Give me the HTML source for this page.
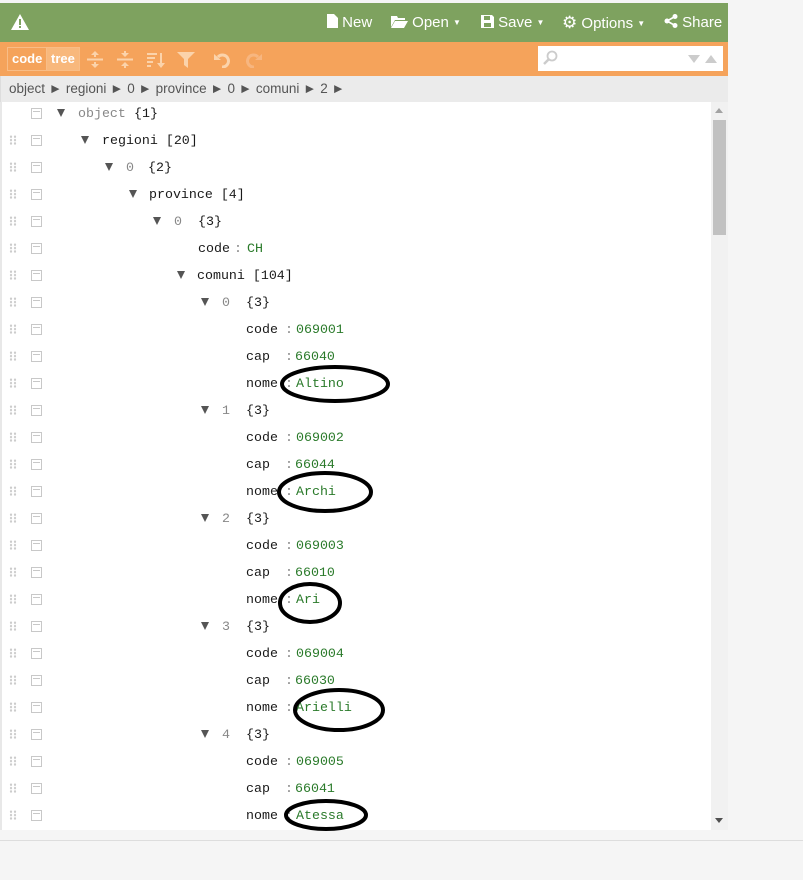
<!DOCTYPE html>
<html><head><meta charset="utf-8"><style>
*{margin:0;padding:0;box-sizing:border-box}
body{width:803px;height:880px;background:#f5f5f5;position:relative;overflow:hidden;font-family:"Liberation Sans",Arial,sans-serif}
#hdr{position:absolute;left:0;top:3px;width:728px;height:39px;background:#7ea25f}
#tb{position:absolute;left:0;top:42px;width:728px;height:34px;background:#f5a35b}
#bc{position:absolute;left:0;top:76px;width:728px;height:26px;background:#ebebeb;color:#555;font-size:13.5px;line-height:26px;padding-left:8px;border-left:1px solid #ddd}
#tree{position:absolute;left:0;top:102px;width:728px;height:728px;background:#fff;border-left:2px solid #e8e8e8;overflow:hidden}
.m{position:absolute;font-family:"Liberation Mono","DejaVu Sans Mono",monospace;font-size:13.3px;line-height:16px;color:#1a1a1a;white-space:pre}
.g{color:#888}.v{color:#2a7a2a}
.t{position:absolute;width:0;height:0;border-left:4.5px solid transparent;border-right:4.5px solid transparent;border-top:8px solid #555}
.cb{position:absolute;left:31px;width:11px;height:11px;border:1px solid #c8c8c8}
.cb:after{content:"";position:absolute;left:1px;right:1px;top:2px;border-top:1px solid #c8c8c8}
.dh{position:absolute;left:9px;width:8px;height:10px;background-image:radial-gradient(circle,#ccc 1.1px,transparent 1.3px);background-size:4px 3.4px}
.hb{position:absolute;top:0;height:39px;line-height:39px;color:#fff;font-size:15px}
.hb small{font-size:8px;vertical-align:2px}
.btn{position:absolute;top:5px;height:24px;line-height:22px;color:#fff;font-size:13px;font-weight:bold;border:1px solid #f8bd87;padding:0 4px}
</style></head><body>
<div id="hdr">
 <svg style="position:absolute;left:11px;top:11px" width="18" height="16" viewBox="0 0 18 16"><path d="M9 0L18 16H0Z" fill="#fff"/><rect x="8" y="5" width="2" height="6" fill="#7ea25f"/><rect x="8" y="12" width="2" height="2" fill="#7ea25f"/></svg>
 <div class="hb" style="left:327px"><svg width="11" height="14" viewBox="0 0 11 14" style="vertical-align:-1px"><path d="M0 0H7L11 4V14H0Z" fill="#fff"/></svg> New</div>
 <div class="hb" style="left:391px"><svg width="17" height="13" viewBox="0 0 17 13" style="vertical-align:-1px"><path d="M0 1H6L7 3H14V5H4L0 12Z M4 6H17L13 13H0Z" fill="#fff"/></svg> Open <small>▼</small></div>
 <div class="hb" style="left:481px"><svg width="13" height="13" viewBox="0 0 13 13" style="vertical-align:-1px"><path d="M0 0H11L13 2V13H0Z" fill="#fff"/><rect x="3" y="1" width="6" height="4" fill="#7ea25f"/><rect x="3" y="8" width="7" height="4" fill="#7ea25f"/></svg> Save <small>▼</small></div>
 <div class="hb" style="left:562px"><span style="font-size:17px">⚙</span> Options <small>▼</small></div>
 <div class="hb" style="left:664px"><svg width="14" height="14" viewBox="0 0 14 14" style="vertical-align:-1px"><circle cx="11" cy="2.5" r="2.5" fill="#fff"/><circle cx="3" cy="7" r="2.5" fill="#fff"/><circle cx="11" cy="11.5" r="2.5" fill="#fff"/><path d="M11 2.5L3 7L11 11.5" stroke="#fff" stroke-width="1.6" fill="none"/></svg> Share</div>
</div>
<div id="tb">
 <div class="btn" style="left:7px;width:40px;border-right:none">code</div>
 <div class="btn" style="left:46px;width:34px;background:#f8b87c">tree</div>
 <svg style="position:absolute;left:87px;top:9px" width="16" height="17" viewBox="0 0 16 17" fill="#fbd3ab"><path d="M8 0L12 4H4Z M8 17L12 13H4Z"/><rect x="7" y="3" width="2" height="3"/><rect x="7" y="11" width="2" height="3"/><rect x="0" y="7.5" width="16" height="2"/></svg>
 <svg style="position:absolute;left:117px;top:9px" width="16" height="17" viewBox="0 0 16 17" fill="#fbd3ab"><path d="M8 6L12 2H4Z M8 11L12 15H4Z"/><rect x="7" y="0" width="2" height="3"/><rect x="7" y="14" width="2" height="3"/><rect x="0" y="7.5" width="16" height="2"/></svg>
 <svg style="position:absolute;left:147px;top:10px" width="18" height="16" viewBox="0 0 18 16" fill="#fbd3ab"><rect x="0" y="1" width="10" height="2"/><rect x="0" y="5" width="8" height="2"/><rect x="0" y="9" width="6" height="2"/><rect x="0" y="13" width="4" height="2"/><rect x="13" y="1" width="2" height="11"/><path d="M10 11H18L14 16Z"/></svg>
 <svg style="position:absolute;left:177px;top:10px" width="18" height="16" viewBox="0 0 18 16" fill="#fbd3ab"><path d="M0 0H18L11 7V16L7 13V7Z"/></svg>
 <svg style="position:absolute;left:214px;top:10px" width="18" height="16" viewBox="0 0 18 16"><path d="M4 5A6 6 0 1 1 8 15" stroke="#fbd3ab" stroke-width="3" fill="none"/><path d="M0 2L7 8H0Z" fill="#fbd3ab"/></svg>
 <svg style="position:absolute;left:244px;top:10px" width="18" height="16" viewBox="0 0 18 16"><path d="M14 5A6 6 0 1 0 10 15" stroke="#f7b680" stroke-width="3" fill="none"/><path d="M18 2L11 8H18Z" fill="#f7b680"/></svg>
 <div style="position:absolute;left:538px;top:4px;width:185px;height:25px;background:#fff">
  <svg style="position:absolute;left:4px;top:4px" width="16" height="16" viewBox="0 0 16 16"><circle cx="10" cy="6" r="4.5" stroke="#ccc" stroke-width="1.8" fill="none"/><path d="M7 9L2 14" stroke="#ccc" stroke-width="2.5"/></svg>
  <svg style="position:absolute;left:150px;top:8px" width="30" height="10" viewBox="0 0 30 10" fill="#ccc"><path d="M0 1H12L6 9Z M17 9H29L23 1Z"/></svg>
 </div>
</div>
<div id="bc">object ► regioni ► 0 ► province ► 0 ► comuni ► 2 ►</div>
<div id="tree">
 <div style="position:absolute;left:709px;top:0;width:17px;height:728px;background:#f1f1f1"></div>
 <div style="position:absolute;left:711px;top:18px;width:13px;height:115px;background:#c1c1c1"></div>
 <div style="position:absolute;left:713px;top:6px;border-left:4px solid transparent;border-right:4px solid transparent;border-bottom:5px solid #a3a3a3"></div>
 <div style="position:absolute;left:713px;top:716px;border-left:4px solid transparent;border-right:4px solid transparent;border-top:5px solid #505050"></div>
</div>
<div style="position:absolute;left:0;top:840px;width:803px;height:1px;background:#ddd"></div>
<div id="rows"></div>
<svg style="position:absolute;left:0;top:0" width="803" height="880">
 <g fill="none" stroke="#000" stroke-width="4">
 <ellipse cx="335" cy="384" rx="53" ry="17"/>
 <ellipse cx="325" cy="492" rx="46" ry="19"/>
 <ellipse cx="310" cy="603" rx="30" ry="19"/>
 <ellipse cx="339" cy="710" rx="44" ry="20"/>
 <ellipse cx="326" cy="815" rx="40" ry="14"/>
 </g>
</svg>
<script>
var R=document.getElementById('rows'),h='';
function row(i,tri,parts){var y=113+i*27;
 if(i>0)h+='<div class="dh" style="top:'+(y-5)+'px"></div>';
 h+='<div class="cb" style="top:'+(y-5)+'px"></div>';
 if(tri!=null)h+='<div class="t" style="left:'+(tri-4)+'px;top:'+(y-4)+'px"></div>';
 parts.forEach(function(p){h+='<div class="m '+(p[2]||'')+'" style="left:'+p[0]+'px;top:'+(y-7)+'px">'+p[1]+'</div>';});}
row(0,61,[[78,'object','g'],[134,'{1}']]);
row(1,85,[[102,'regioni [20]']]);
row(2,109,[[126,'0','g'],[148,'{2}']]);
row(3,133,[[149,'province [4]']]);
row(4,157,[[174,'0','g'],[198,'{3}']]);
row(5,null,[[198,'code'],[234,':','g'],[247,'CH','v']]);
row(6,181,[[197,'comuni [104]']]);
var d=[['069001','66040','Altino'],['069002','66044','Archi'],['069003','66010','Ari'],['069004','66030','Arielli'],['069005','66041','Atessa']];
var i=7;
d.forEach(function(e,k){
 row(i++,205,[[222,String(k),'g'],[246,'{3}']]);
 row(i++,null,[[246,'code'],[285,':','g'],[296,e[0],'v']]);
 row(i++,null,[[246,'cap'],[285,':','g'],[295,e[1],'v']]);
 row(i++,null,[[246,'nome'],[285,':','g'],[296,e[2],'v']]);
});
R.innerHTML=h;
</script>
</body></html>
